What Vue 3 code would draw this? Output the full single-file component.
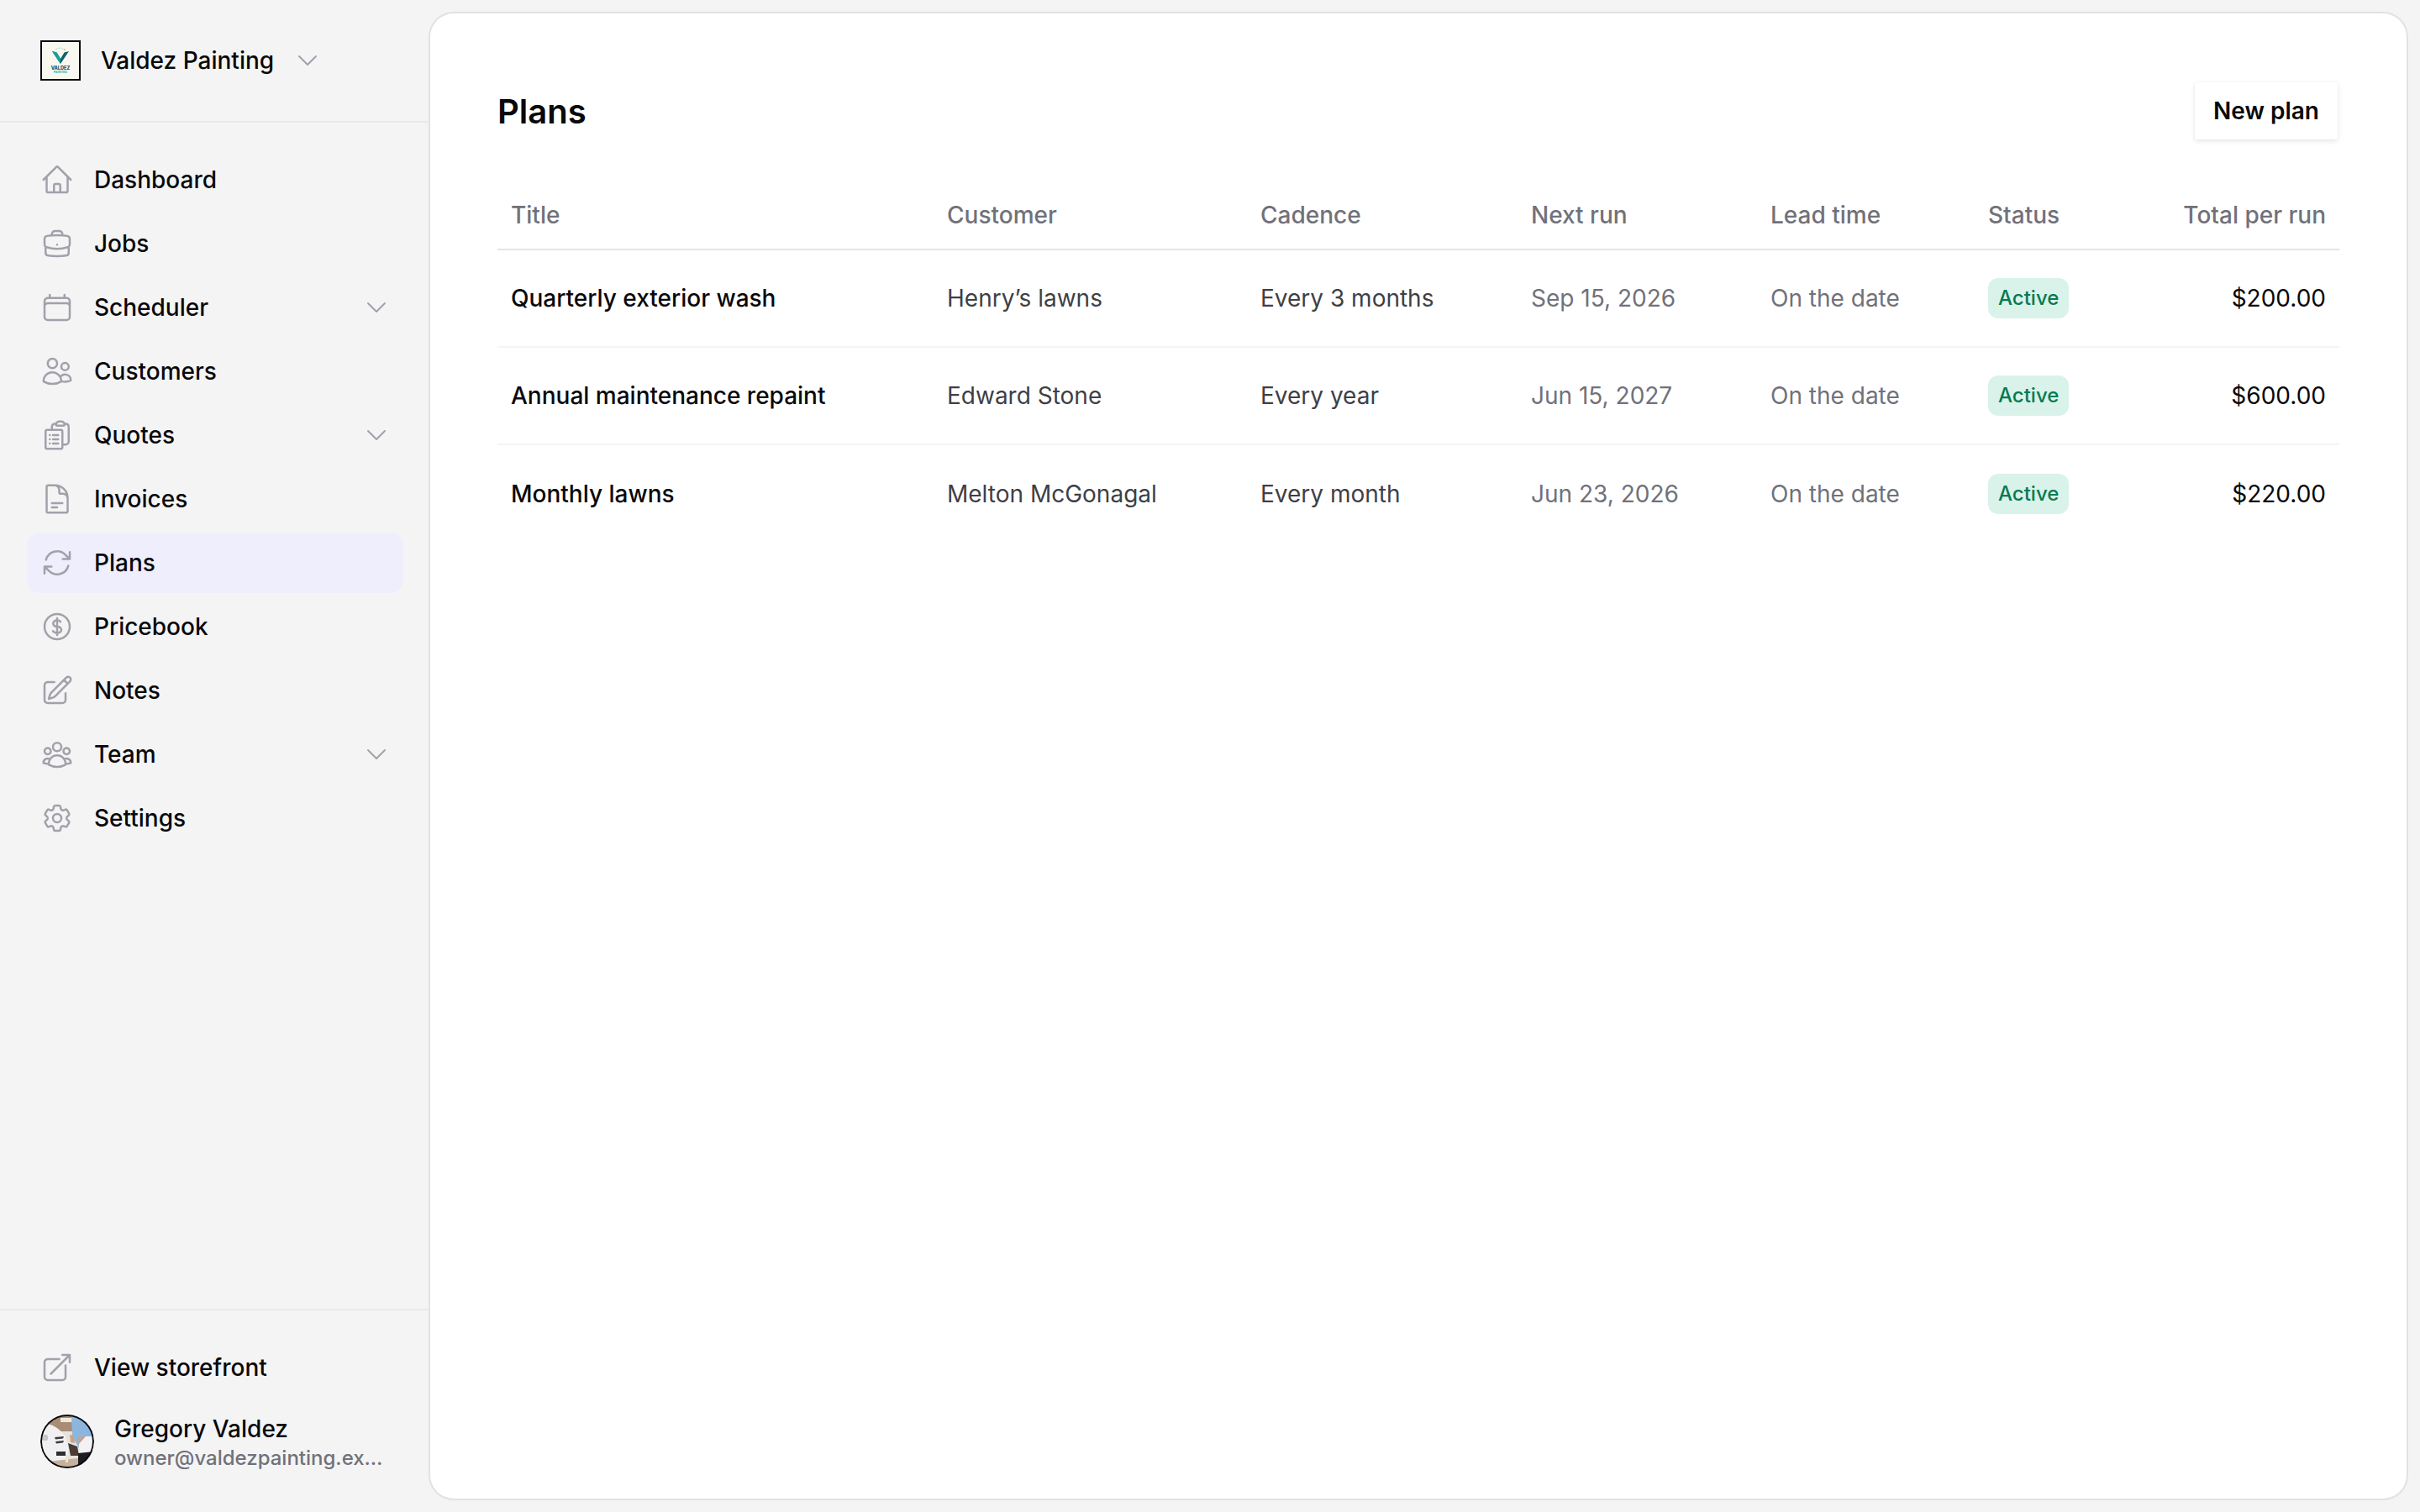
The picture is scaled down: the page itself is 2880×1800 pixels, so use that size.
<script setup>
const navItems = [
  { label: 'Dashboard', icon: ['m2.25 12 8.954-8.955c.44-.439 1.152-.439 1.591 0L21.75 12M4.5 9.75v10.125c0 .621.504 1.125 1.125 1.125H9.75v-4.875c0-.621.504-1.125 1.125-1.125h2.25c.621 0 1.125.504 1.125 1.125V21h4.125c.621 0 1.125-.504 1.125-1.125V9.75M8.25 21h8.25'] },
  { label: 'Jobs', icon: ['M20.25 14.15v4.25c0 1.094-.787 2.036-1.872 2.18-2.087.277-4.216.42-6.378.42s-4.291-.143-6.378-.42c-1.085-.144-1.872-1.086-1.872-2.18v-4.25m16.5 0a2.18 2.18 0 0 0 .75-1.661V8.706c0-1.081-.768-2.015-1.837-2.175a48.114 48.114 0 0 0-3.413-.387m4.5 8.006c-.194.165-.42.295-.673.38A23.978 23.978 0 0 1 12 15.75c-2.648 0-5.195-.429-7.577-1.22a2.016 2.016 0 0 1-.673-.38m0 0A2.18 2.18 0 0 1 3 12.489V8.706c0-1.081.768-2.015 1.837-2.175a48.111 48.111 0 0 1 3.413-.387m7.5 0V5.25A2.25 2.25 0 0 0 13.5 3h-3a2.25 2.25 0 0 0-2.25 2.25v.894m7.5 0a48.667 48.667 0 0 0-7.5 0M12 12.75h.008v.008H12v-.008Z'] },
  { label: 'Scheduler', chevron: true, icon: ['M6.75 3v2.25M17.25 3v2.25M3 18.75V7.5a2.25 2.25 0 0 1 2.25-2.25h13.5A2.25 2.25 0 0 1 21 7.5v11.25m-18 0A2.25 2.25 0 0 0 5.25 21h13.5A2.25 2.25 0 0 0 21 18.75m-18 0v-7.5A2.25 2.25 0 0 1 5.25 9h13.5A2.25 2.25 0 0 1 21 11.25v7.5'] },
  { label: 'Customers', icon: ['M15 19.128a9.38 9.38 0 0 0 2.625.372 9.337 9.337 0 0 0 4.121-.952 4.125 4.125 0 0 0-7.533-2.493M15 19.128v-.003c0-1.113-.285-2.16-.786-3.07M15 19.128v.106A12.318 12.318 0 0 1 8.624 21c-2.331 0-4.512-.645-6.374-1.766l-.001-.109a6.375 6.375 0 0 1 11.964-3.07M12 6.375a3.375 3.375 0 1 1-6.75 0 3.375 3.375 0 0 1 6.75 0Zm8.25 2.25a2.625 2.625 0 1 1-5.25 0 2.625 2.625 0 0 1 5.25 0Z'] },
  { label: 'Quotes', chevron: true, icon: ['M9 12h3.75M9 15h3.75M9 18h3.75m3 .75H18a2.25 2.25 0 0 0 2.25-2.25V6.108c0-1.135-.845-2.098-1.976-2.192a48.424 48.424 0 0 0-1.123-.08m-5.801 0c-.065.21-.1.433-.1.664 0 .414.336.75.75.75h4.5a.75.75 0 0 0 .75-.75 2.25 2.25 0 0 0-.1-.664m-5.8 0A2.251 2.251 0 0 1 13.5 2.25H15c1.012 0 1.867.668 2.15 1.586m-5.8 0c-.376.023-.75.05-1.124.08C9.095 4.01 8.25 4.973 8.25 6.108V8.25m0 0H4.875c-.621 0-1.125.504-1.125 1.125v11.25c0 .621.504 1.125 1.125 1.125h9.75c.621 0 1.125-.504 1.125-1.125V9.375c0-.621-.504-1.125-1.125-1.125H8.25ZM6.75 12h.008v.008H6.75V12Zm0 3h.008v.008H6.75V15Zm0 3h.008v.008H6.75V18Z'] },
  { label: 'Invoices', icon: ['M19.5 14.25v-2.625a3.375 3.375 0 0 0-3.375-3.375h-1.5A1.125 1.125 0 0 1 13.5 7.125v-1.5a3.375 3.375 0 0 0-3.375-3.375H8.25m0 12.75h7.5m-7.5 3H12M10.5 2.25H5.625c-.621 0-1.125.504-1.125 1.125v17.25c0 .621.504 1.125 1.125 1.125h12.75c.621 0 1.125-.504 1.125-1.125V11.25a9 9 0 0 0-9-9Z'] },
  { label: 'Plans', active: true, icon: ['M16.023 9.348h4.992v-.001M2.985 19.644v-4.992m0 0h4.992m-4.993 0 3.181 3.183a8.25 8.25 0 0 0 13.803-3.7M4.031 9.865a8.25 8.25 0 0 1 13.803-3.7l3.181 3.182m0-4.991v4.99'] },
  { label: 'Pricebook', icon: ['M12 6v12m-3-2.818.879.659c1.171.879 3.07.879 4.242 0 1.172-.879 1.172-2.303 0-3.182C13.536 12.219 12.768 12 12 12c-.725 0-1.45-.22-2.003-.659-1.106-.879-1.106-2.303 0-3.182s2.9-.879 4.006 0l.415.33M21 12a9 9 0 1 1-18 0 9 9 0 0 1 18 0Z'] },
  { label: 'Notes', icon: ['m16.862 4.487 1.687-1.688a1.875 1.875 0 1 1 2.652 2.652L10.582 16.07a4.5 4.5 0 0 1-1.897 1.13L6 18l.8-2.685a4.5 4.5 0 0 1 1.13-1.897l8.932-8.931Zm0 0L19.5 7.125M18 14v4.75A2.25 2.25 0 0 1 15.75 21H5.25A2.25 2.25 0 0 1 3 18.75V8.25A2.25 2.25 0 0 1 5.25 6H10'] },
  { label: 'Team', chevron: true, icon: ['M18 18.72a9.094 9.094 0 0 0 3.741-.479 3 3 0 0 0-4.682-2.72m.94 3.198.001.031c0 .225-.012.447-.037.666A11.944 11.944 0 0 1 12 21c-2.17 0-4.207-.576-5.963-1.584A6.062 6.062 0 0 1 6 18.719m12 0a5.971 5.971 0 0 0-.941-3.197m0 0A5.995 5.995 0 0 0 12 12.75a5.995 5.995 0 0 0-5.058 2.772m0 0a3 3 0 0 0-4.681 2.72 8.986 8.986 0 0 0 3.74.477m.94-3.197a5.971 5.971 0 0 0-.94 3.197M15 6.75a3 3 0 1 1-6 0 3 3 0 0 1 6 0Zm6 3a2.25 2.25 0 1 1-4.5 0 2.25 2.25 0 0 1 4.5 0Zm-13.5 0a2.25 2.25 0 1 1-4.5 0 2.25 2.25 0 0 1 4.5 0Z'] },
  { label: 'Settings', icon: ['M9.594 3.94c.09-.542.56-.94 1.11-.94h2.593c.55 0 1.02.398 1.11.94l.213 1.281c.063.374.313.686.645.87.074.04.147.083.22.127.325.196.72.257 1.075.124l1.217-.456a1.125 1.125 0 0 1 1.37.49l1.296 2.247a1.125 1.125 0 0 1-.26 1.431l-1.003.827c-.293.241-.438.613-.43.992a7.723 7.723 0 0 1 0 .255c-.008.378.137.75.43.991l1.004.827c.424.35.534.955.26 1.43l-1.298 2.247a1.125 1.125 0 0 1-1.369.491l-1.217-.456c-.355-.133-.75-.072-1.076.124a6.47 6.47 0 0 1-.22.128c-.331.183-.581.495-.644.869l-.213 1.281c-.09.543-.56.94-1.11.94h-2.594c-.55 0-1.019-.398-1.11-.94l-.213-1.281c-.062-.374-.312-.686-.644-.87a6.52 6.52 0 0 1-.22-.127c-.325-.196-.72-.257-1.076-.124l-1.217.456a1.125 1.125 0 0 1-1.369-.49l-1.297-2.247a1.125 1.125 0 0 1 .26-1.431l1.004-.827c.292-.24.437-.613.43-.991a6.932 6.932 0 0 1 0-.255c.007-.38-.138-.751-.43-.992l-1.004-.827a1.125 1.125 0 0 1-.26-1.43l1.297-2.247a1.125 1.125 0 0 1 1.37-.491l1.216.456c.356.133.751.072 1.076-.124.072-.044.146-.086.22-.128.332-.183.582-.495.644-.869l.214-1.28Z', 'M15 12a3 3 0 1 1-6 0 3 3 0 0 1 6 0Z'] }
]

const storefrontIcon = 'M13.5 6H5.25A2.25 2.25 0 0 0 3 8.25v10.5A2.25 2.25 0 0 0 5.25 21h10.5A2.25 2.25 0 0 0 18 18.75V10.5m-10.5 6L21 3m0 0h-5.25M21 3v5.25'
const chevronPath = 'm19.5 8.25-7.5 7.5-7.5-7.5'

const plans = [
  { title: 'Quarterly exterior wash', customer: 'Henry’s lawns', cadence: 'Every 3 months', next: 'Sep 15, 2026', lead: 'On the date', total: '$200.00' },
  { title: 'Annual maintenance repaint', customer: 'Edward Stone', cadence: 'Every year', next: 'Jun 15, 2027', lead: 'On the date', total: '$600.00' },
  { title: 'Monthly lawns', customer: 'Melton McGonagal', cadence: 'Every month', next: 'Jun 23, 2026', lead: 'On the date', total: '$220.00' }
]
</script>

<template>
  <div class="app">
    <aside class="sidebar">
      <div class="brand">
        <svg class="logo" viewBox="0 0 44 44">
          <rect x="0" y="0" width="44" height="44" fill="#f8f8f1" />
          <path d="M16 9 Q21 5 26 9" fill="none" stroke="#b9d6cf" stroke-width="0.8" />
          <circle cx="27" cy="9" r="0.9" fill="#e5b94a" />
          <path d="M12 11 L22 26 L32 11 L26.5 12.5 L22 20 L17.5 12.5 Z" fill="#0f5f70" />
          <path d="M12 11 L22 26 L22 20 L17.5 12.5 Z" fill="#15a196" />
          <text x="22" y="32.5" text-anchor="middle" class="logo-top">VALDEZ</text>
          <text x="22" y="36.5" text-anchor="middle" class="logo-sub">PAINTING</text>
        </svg>
        <span class="brand-name">Valdez Painting</span>
        <svg class="chevron" viewBox="0 0 24 24" fill="none"><path :d="chevronPath" /></svg>
      </div>

      <nav class="nav">
        <a v-for="item in navItems" :key="item.label" class="nav-item" :class="{ active: item.active }">
          <svg class="icon" viewBox="0 0 24 24" fill="none"><path v-for="d in item.icon" :key="d" :d="d" /></svg>
          <span class="nav-label">{{ item.label }}</span>
          <svg v-if="item.chevron" class="chevron" viewBox="0 0 24 24" fill="none"><path :d="chevronPath" /></svg>
        </a>
      </nav>

      <div class="side-foot">
        <a class="nav-item">
          <svg class="icon" viewBox="0 0 24 24" fill="none"><path :d="storefrontIcon" /></svg>
          <span class="nav-label">View storefront</span>
        </a>
        <div class="user">
          <svg class="avatar" viewBox="0 0 64 64">
            <defs>
              <filter id="soft" x="-5%" y="-5%" width="110%" height="110%">
                <feGaussianBlur stdDeviation="0.7" />
              </filter>
            </defs>
            <g filter="url(#soft)">
              <rect width="64" height="64" fill="#e7e2da" />
              <rect x="10" y="0" width="32" height="20" fill="#a98c74" />
              <rect x="24" y="4" width="14" height="5" fill="#efe9dc" />
              <path d="M37 2 L46 0 L62 6 L64 34 L46 40 L38 26 Z" fill="#8db6de" />
              <path d="M0 10 Q18 10 30 26 L34 42 L32 58 L0 60 Z" fill="#f0f0f2" />
              <rect x="2" y="24" width="7" height="7" rx="2" fill="#c4c8c8" />
              <path d="M17 27 L28 26 L27 28.5 L18 29.5 Z M18 32 L28 31 L27 33.5 L19 34.5 Z" fill="#3a3a40" />
              <rect x="19" y="44" width="11" height="5" fill="#2f2f32" />
              <path d="M33 34 L44 38 L46 49 L36 49 Z" fill="#4a3d36" />
              <path d="M35 24 L40 25 L41 34 L36 33 Z M44 28 L54 25 L55 30 L46 35 Z" fill="#c8a38b" />
              <path d="M46 35 L54 26 L64 26 L64 46 L46 48 Z" fill="#f2f2f4" />
              <path d="M45 46 L64 44 L64 64 L45 64 Z" fill="#1e1e21" />
              <path d="M8 56 L45 52 L45 64 L8 64 Z" fill="#c6b29c" />
              <rect x="30" y="48" width="3" height="9" fill="#efe6c8" />
            </g>
            <circle cx="32" cy="32" r="31" fill="none" stroke="#09090b" stroke-width="2" />
          </svg>
          <div class="user-text">
            <div class="user-name">Gregory Valdez</div>
            <div class="user-mail">owner@valdezpainting.example</div>
          </div>
        </div>
      </div>
    </aside>

    <main class="main">
      <div class="page-head">
        <h1>Plans</h1>
        <button class="new-btn">New plan</button>
      </div>

      <table class="plans">
        <colgroup>
          <col style="width: 519px" />
          <col style="width: 373px" />
          <col style="width: 322px" />
          <col style="width: 285px" />
          <col style="width: 259px" />
          <col style="width: 200px" />
          <col />
        </colgroup>
        <thead>
          <tr>
            <th>Title</th>
            <th>Customer</th>
            <th>Cadence</th>
            <th>Next run</th>
            <th>Lead time</th>
            <th>Status</th>
            <th class="right">Total per run</th>
          </tr>
        </thead>
        <tbody>
          <tr v-for="plan in plans" :key="plan.title">
            <td class="title">{{ plan.title }}</td>
            <td class="mid">{{ plan.customer }}</td>
            <td class="mid">{{ plan.cadence }}</td>
            <td class="soft">{{ plan.next }}</td>
            <td class="soft">{{ plan.lead }}</td>
            <td><span class="badge">Active</span></td>
            <td class="right amount">{{ plan.total }}</td>
          </tr>
        </tbody>
      </table>
    </main>
  </div>
</template>

<style scoped>
.app {
  display: flex;
  height: 1800px;
  background: #f4f4f5;
  font-family: Inter, "Liberation Sans", sans-serif;
  font-size: 28px;
  color: #09090b;
}

.sidebar {
  width: 512px;
  flex-shrink: 0;
  display: flex;
  flex-direction: column;
}

.brand {
  height: 146px;
  box-sizing: border-box;
  padding-left: 48px;
  display: flex;
  align-items: center;
  border-bottom: 2px solid #e9e9eb;
}

.logo {
  width: 48px;
  height: 48px;
  box-sizing: border-box;
  border: 2px solid #09090b;
  flex-shrink: 0;
}

.logo-top {
  font-family: Inter, sans-serif;
  font-size: 5.6px;
  font-weight: 800;
  fill: #16506a;
}

.logo-sub {
  font-family: Inter, sans-serif;
  font-size: 3.4px;
  font-weight: 700;
  fill: #2bb3a3;
}

.brand-name {
  margin-left: 24px;
  margin-right: 24px;
  font-weight: 500;
}

.chevron {
  width: 32px;
  height: 32px;
  flex-shrink: 0;
}

.chevron path {
  stroke: #a1a1aa;
  stroke-width: 1.5;
  stroke-linecap: round;
  stroke-linejoin: round;
}

.nav {
  flex: 1;
  display: flex;
  flex-direction: column;
  gap: 4px;
  padding: 32px 32px 0;
}

.nav-item {
  height: 72px;
  display: flex;
  align-items: center;
  gap: 24px;
  padding: 0 16px;
  border-radius: 16px;
}

.nav-item.active {
  background: #eeeefc;
}

.nav-label {
  flex: 1;
  font-weight: 500;
}

.icon {
  width: 40px;
  height: 40px;
  flex-shrink: 0;
}

.icon path {
  stroke: #a1a1aa;
  stroke-width: 1.5;
  stroke-linecap: round;
  stroke-linejoin: round;
}

.side-foot {
  border-top: 2px solid #e9e9eb;
  padding: 32px 32px 48px;
  display: flex;
  flex-direction: column;
  gap: 20px;
}

.user {
  display: flex;
  align-items: flex-start;
  gap: 24px;
  padding-left: 16px;
}

.avatar {
  width: 64px;
  height: 64px;
  border-radius: 50%;
  flex-shrink: 0;
}

.user-text {
  width: 320px;
  min-width: 0;
}

.user-name {
  line-height: 34px;
  font-weight: 500;
}

.user-mail {
  margin-top: 2px;
  font-size: 24px;
  font-weight: 500;
  line-height: 32px;
  color: #71717a;
  white-space: nowrap;
  overflow: hidden;
  text-overflow: ellipsis;
}

.main {
  flex: 1;
  margin: 16px 16px 16px 0;
  padding: 82px 80px 0;
  box-sizing: border-box;
  background: #fff;
  border-radius: 28px;
  box-shadow: 0 0 0 2px #e2e2e4, 0 1px 3px rgba(0, 0, 0, 0.08);
}

.page-head {
  margin-bottom: 70px;
  display: flex;
  align-items: center;
  justify-content: space-between;
}

.page-head h1 {
  margin: 0;
  font-size: 40px;
  font-weight: 600;
}

.new-btn {
  width: 170px;
  height: 68px;
  margin-right: 2px;
  border: none;
  background: #fff;
  font-family: inherit;
  font-size: 28px;
  font-weight: 600;
  color: #09090b;
  border-radius: 2px;
  box-shadow: 0 2px 6px rgba(0, 0, 0, 0.1), 0 0 2px rgba(0, 0, 0, 0.06);
}

.plans {
  width: 100%;
  table-layout: fixed;
  border-collapse: collapse;
}

.plans th {
  padding: 0 16px 20px;
  line-height: 40px;
  text-align: left;
  font-weight: 500;
  color: #71717a;
  border-bottom: 2px solid #e4e4e7;
}

.plans td {
  height: 116px;
  box-sizing: border-box;
  padding: 0 16px;
  border-bottom: 2px solid #f4f4f5;
  white-space: nowrap;
}

.plans tr:last-child td {
  border-bottom: none;
}

.plans .right {
  text-align: right;
}

.title {
  font-weight: 500;
}

.mid {
  color: #3f3f46;
}

.soft {
  color: #71717a;
}

.badge {
  display: inline-block;
  padding: 0 12px;
  height: 48px;
  line-height: 48px;
  border-radius: 12px;
  background: #d9f3ea;
  color: #067a52;
  font-size: 24px;
  font-weight: 500;
  vertical-align: middle;
}
</style>

<style>
html, body {
  margin: 0;
  background: #f4f4f5;
}
</style>
